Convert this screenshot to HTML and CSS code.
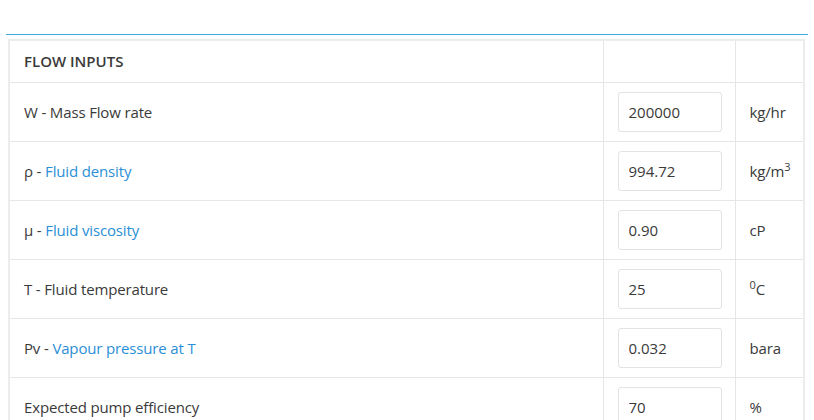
FILE: index.html
```html
<!DOCTYPE html>
<html>
<head>
<meta charset="utf-8">
<link rel="stylesheet" href="styles.css">
</head>
<body>
<div class="page">
  <div class="rule"></div>
  <table class="inputs">
    <colgroup>
      <col class="c-label">
      <col class="c-input">
      <col class="c-unit">
    </colgroup>
    <tr class="head">
      <th>FLOW INPUTS</th>
      <th></th>
      <th></th>
    </tr>
    <tr>
      <td>W - Mass Flow rate</td>
      <td><input class="field" value="200000"></td>
      <td>kg/hr</td>
    </tr>
    <tr>
      <td>ρ - <a class="link">Fluid density</a></td>
      <td><input class="field" value="994.72"></td>
      <td>kg/m<sup>3</sup></td>
    </tr>
    <tr>
      <td>μ - <a class="link">Fluid viscosity</a></td>
      <td><input class="field" value="0.90"></td>
      <td>cP</td>
    </tr>
    <tr>
      <td>T - Fluid temperature</td>
      <td><input class="field" value="25"></td>
      <td><sup>0</sup>C</td>
    </tr>
    <tr>
      <td>Pv - <a class="link">Vapour pressure at T</a></td>
      <td><input class="field" value="0.032"></td>
      <td>bara</td>
    </tr>
    <tr>
      <td>Expected pump efficiency</td>
      <td><input class="field" value="70"></td>
      <td>%</td>
    </tr>
  </table>
</div>
</body>
</html>
```

FILE: styles.css
```css
html, body {
  margin: 0;
  padding: 0;
  background: #fff;
  overflow: hidden;
}
body {
  font-family: "Open Sans", "Liberation Sans", sans-serif;
  font-size: 15px;
  color: #3a3a3a;
}
.page {
  padding-top: 34px;
}
.rule {
  margin: 0 6px;
  border-top: 1px solid #3aaae3;
}
.inputs {
  margin: 4px 8px 0 8px;
  width: 797px;
  border-collapse: collapse;
  border: 2px solid #ececec;
  table-layout: fixed;
}
.c-input { width: 132px; }
.c-unit { width: 69px; }
.inputs th,
.inputs td {
  border: 1px solid #e6e6e6;
  text-align: left;
  vertical-align: middle;
  padding: 9px 14px;
  line-height: 22px;
  letter-spacing: -0.15px;
}
.inputs th {
  font-weight: 600;
  letter-spacing: 0;
  padding-top: 9px;
  padding-bottom: 10px;
}
.field {
  display: block;
  box-sizing: border-box;
  width: 104px;
  height: 40px;
  margin: 0;
  padding: 0 10px;
  border: 1px solid #e3e3e3;
  border-radius: 3px;
  font-family: "Open Sans", "Liberation Sans", sans-serif;
  font-size: 15px;
  color: #3a3a3a;
  background: #fff;
  outline: none;
}
.link {
  color: #2a8fd6;
  text-decoration: none;
}
sup {
  font-size: 11px;
  line-height: 0;
  vertical-align: 6px;
}
```
